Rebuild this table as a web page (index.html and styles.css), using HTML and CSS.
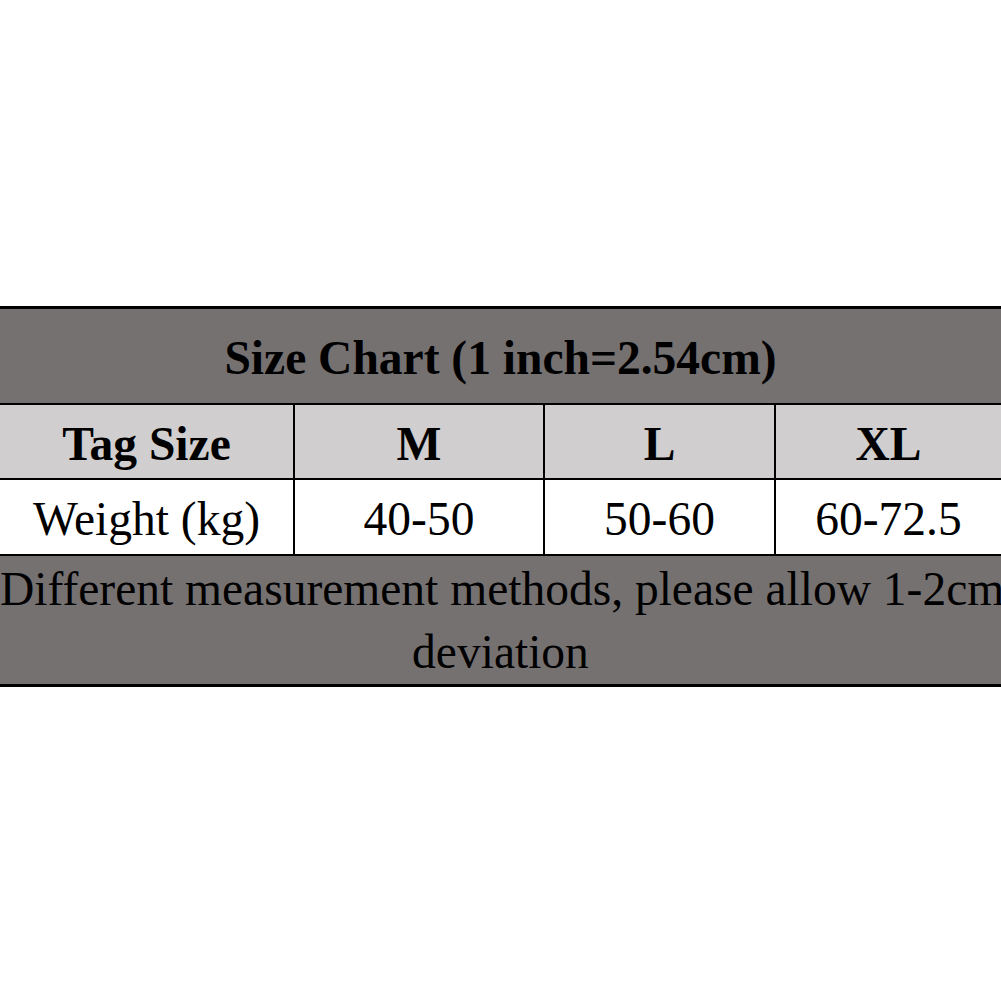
FILE: index.html
```html
<!DOCTYPE html>
<html lang="en">
<head>
  <meta charset="UTF-8" />
  <meta name="viewport" content="width=device-width, initial-scale=1.0"/>
  <title>Size Chart</title>
  <link rel="stylesheet" href="styles.css">
</head>
<body>
  <div class="chart">
    <table class="sizes">
      <colgroup>
        <col class="c1"><col class="c2"><col class="c3"><col class="c4">
      </colgroup>
      <tr class="title">
        <th colspan="4">Size Chart (1 inch=2.54cm)</th>
      </tr>
      <tr class="head">
        <th>Tag Size</th>
        <th>M</th>
        <th>L</th>
        <th>XL</th>
      </tr>
      <tr class="data">
        <td>Weight (kg)</td>
        <td>40-50</td>
        <td>50-60</td>
        <td>60-72.5</td>
      </tr>
      <tr class="note">
        <td colspan="4">Different measurement methods, please allow 1-2cm<br>deviation</td>
      </tr>
    </table>
  </div>
</body>
</html>
```

FILE: styles.css
```css
* {
  margin: 0;
  padding: 0;
  box-sizing: border-box;
}
html, body {
  width: 100%;
  height: 100%;
  overflow: hidden;
  background-color: #fff;
  font-family: "Liberation Serif", "Times New Roman", serif;
}
.chart {
  padding-top: 306px;
  width: 1001px;
  overflow: hidden;
}
.sizes {
  width: 1001px;
  border-collapse: collapse;
  table-layout: fixed;
  color: #000;
}
.c1 { width: 294px; }
.c2 { width: 250px; }
.c3 { width: 231px; }
.c4 { width: 226px; }

.sizes th,
.sizes td {
  text-align: center;
  vertical-align: middle;
  border: 2px solid #000;
  padding: 0;
  font-size: 47.5px;
}
.sizes tr > :first-child { border-left: none; }
.sizes tr > :last-child { border-right: none; }

.title th {
  height: 96px;
  background-color: #757171;
  font-weight: bold;
  border-top: 3px solid #000;
  padding-top: 4px;
}
.head th {
  height: 75px;
  background-color: #d0cece;
  font-weight: bold;
  padding-top: 6px;
}
.data td {
  height: 76px;
  background-color: #fff;
  padding-top: 4px;
}
.note td {
  height: 130px;
  background-color: #757171;
  line-height: 63px;
  white-space: nowrap;
  border-bottom: 3px solid #000;
  padding-top: 2px;
}
```
